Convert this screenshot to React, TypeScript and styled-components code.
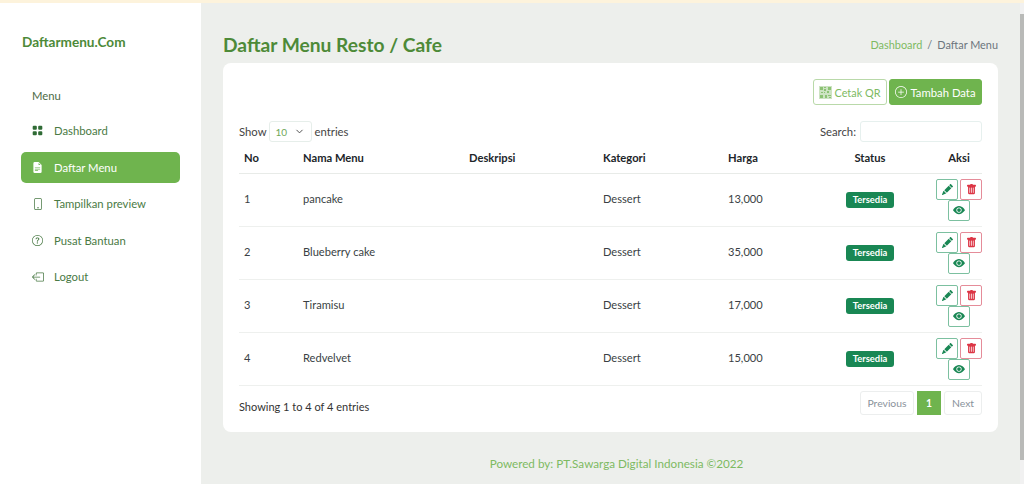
import React from "react";
import styled, { createGlobalStyle } from "styled-components";
import { ChevronDown } from "lucide-react";
import { BsGridFill, BsFileEarmarkTextFill, BsPhone, BsQuestionCircle, BsBoxArrowLeft, BsPlusCircle, BsEyeFill, BsPencilFill, BsTrashFill } from "react-icons/bs";

const Global = createGlobalStyle`
  html, body { margin: 0; padding: 0; height: 100%; overflow: hidden; background: #edefec; }
  body { font-family: "Lato", "Noto Sans", sans-serif; font-size: 11.3px; color: #333; }
  * { box-sizing: border-box; }
`;
const Page = styled.div`
  width: 1024px; height: 484px; display: flex; flex-direction: column; overflow: hidden; position: relative;
`;
const TopStrip = styled.div`height: 3px; background: #fdf3dc; flex: none;`;
const Body = styled.div`flex: 1; display: flex; min-height: 0;`;
const Sidebar = styled.aside`
  width: 201px; flex: none; background: #fff; padding: 30px 21px 0; display: flex; flex-direction: column;
`;
const Brand = styled.div`
  font-size: 13.6px; font-weight: 700; color: #4d8a38; line-height: 18px; margin-bottom: 37px; padding-left: 1px;
`;
const MenuLabel = styled.div`
  font-size: 11.3px; color: #4d6b47; padding-left: 11px; line-height: 16px; margin-bottom: 11px;
`;
const NavItem = styled.div<{ $active?: boolean }>`
  height: 31px; margin-bottom: 5.6px; display: flex; align-items: center; padding-left: 11px;
  border-radius: 5px; font-size: 11.3px;
  color: ${p => (p.$active ? "#fff" : "#4a7a45")};
  background: ${p => (p.$active ? "#6fb44e" : "transparent")};
`;
const NavIcon = styled.span<{ $dark?: boolean }>`
  width: 22px; flex: none; display: flex; align-items: center; color: ${p => (p.$dark ? "#2f6b35" : "inherit")};
`;
const Main = styled.main`flex: 1; min-width: 0; padding: 0 26px 0 22px; display: flex; flex-direction: column;`;
const Header = styled.div`
  height: 60px; display: flex; justify-content: space-between; align-items: flex-end; padding-bottom: 6px;
`;
const Title = styled.h1`margin: 0; font-size: 19.2px; font-weight: 700; color: #4d8a38; line-height: 24px;`;
const Crumbs = styled.div`font-size: 10.9px; color: #6c757d; display: flex; gap: 5px; margin-bottom: 6px;`;
const CrumbLink = styled.span`color: #7dba62;`;
const Card = styled.section`
  background: #fff; border-radius: 8px; padding: 16px; height: 369px; display: flex; flex-direction: column;
`;
const Actions = styled.div`display: flex; justify-content: flex-end; gap: 2px; margin-bottom: 16px;`;
const OutlineBtn = styled.button`
  width: 74px; height: 26px; padding: 0; display: flex; align-items: center; justify-content: center; gap: 2px; border-radius: 3px;
  font: inherit; font-size: 10.9px; background: #fff; color: #7dba62; border: 1px solid #b9d9a9;
`;
const SolidBtn = styled.button`
  width: 93px; height: 26px; padding: 0; display: flex; align-items: center; justify-content: center; gap: 3px; border-radius: 3px;
  font: inherit; font-size: 11.3px; background: #6fb44e; color: #fff; border: 1px solid #6fb44e;
`;
const Controls = styled.div`display: flex; justify-content: space-between; align-items: center; height: 21px; margin-bottom: 2px;`;
const Group = styled.div`display: flex; align-items: center; gap: 2px; color: #444;`;
const SelectBox = styled.div`
  width: 43px; height: 21px; border: 1px solid #e6eeea; border-radius: 3px; display: flex; align-items: center;
  justify-content: space-between; padding: 0 6px; font-size: 10px; color: #6fa85a; margin-right: 1px;
`;
const SearchBox = styled.div`width: 122px; height: 21px; border: 1px solid #e6f0ee; border-radius: 3px; margin-left: 2px;`;
const Table = styled.table`width: 743px; border-collapse: collapse; table-layout: fixed;`;
const Th = styled.th`
  height: 29px; padding: 0 5px 2px; font-size: 11.2px; font-weight: 700; color: #212529; border-bottom: 1px solid #e8ebe8; text-align: left;
`;
const Td = styled.td`
  height: 53px; padding: 0 5px 2px; font-size: 11.1px; color: #3a3f44; border-bottom: 1px solid #eef0ee;
`;
const StatusTh = styled(Th)`padding-right: 24px; text-align: center;`;
const AksiTh = styled(Th)`padding: 0 0 2px; text-align: center;`;
const StatusTd = styled(Td)`padding: 0 24px 0 5px; text-align: center;`;
const ActionCell = styled.td`height: 53px; padding: 0; border-bottom: 1px solid #eef0ee;`;
const Badge = styled.span`
  display: inline-block; width: 48px; height: 16px; line-height: 16px; border-radius: 3px;
  background: #198754; color: #fff; font-size: 9.4px; font-weight: 700; text-align: center;
`;
const IconRow = styled.div`display: flex; flex-wrap: wrap; justify-content: center; column-gap: 2px; width: 46px;`;
const IconBtn = styled.div<{ $danger?: boolean }>`
  width: 22px; height: 21px; border-radius: 2px; display: flex; align-items: center; justify-content: center;
  border: 1px solid ${p => (p.$danger ? "#e58c99" : "#7cc0a0")};
  color: ${p => (p.$danger ? "#dc3545" : "#198754")};
`;
const Footer = styled.div`display: flex; justify-content: space-between; align-items: center; margin-top: 5px;`;
const Info = styled.div`color: #333; padding-top: 8px; font-size: 11px;`;
const Pager = styled.div`display: flex; gap: 3px;`;
const PageBtn = styled.div<{ $active?: boolean; $w: number }>`
  width: ${p => p.$w}px; height: 24px; display: flex; align-items: center; justify-content: center; font-size: 10.4px;
  border: 1px solid ${p => (p.$active ? "#6fb44e" : "#eceeee")}; border-radius: ${p => (p.$active ? "0" : "3px")};
  background: ${p => (p.$active ? "#6fb44e" : "#fff")}; color: ${p => (p.$active ? "#fff" : "#8a939b")};
  font-weight: ${p => (p.$active ? 700 : 400)};
`;
const PowerLine = styled.div`text-align: center; color: #7dba62; font-size: 11.7px; margin-top: 24px; padding-left: 12px;`;
const ScrollTrack = styled.div`position: absolute; right: 0; top: 3px; bottom: 0; width: 4px; background: #f1f1f1;`;
const ScrollThumb = styled.div`position: absolute; left: 0; right: 0; top: 11px; height: 446px; background: #b9bab8;`;

const QrIcon = () => (
  <svg width="13" height="13" viewBox="0 0 13 13" fill="#a3cc8f">
    <path d="M0 0h13v13H0z" opacity=".55" />
    <path d="M1 1h3v3H1zM9 1h3v3H9zM1 9h3v3H1zM5 1h2v1H5zM5 3h2v2H5zM5 6h1v1H5zM8 5h2v2H8zM2 6h2v1H2zM6 9h2v3H6zM9 9h3v1H9zM10 11h2v1h-2z" fill="#8cc274" />
  </svg>
);
const rows = [
  ["1", "pancake", "13,000"],
  ["2", "Blueberry cake", "35,000"],
  ["3", "Tiramisu", "17,000"],
  ["4", "Redvelvet", "15,000"],
];
export default function App() {
  return (
    <Page>
      <Global />
      <TopStrip />
      <Body>
        <Sidebar>
          <Brand>Daftarmenu.Com</Brand>
          <MenuLabel>Menu</MenuLabel>
          <NavItem><NavIcon $dark><BsGridFill size={11} /></NavIcon>Dashboard</NavItem>
          <NavItem $active><NavIcon><BsFileEarmarkTextFill size={11} /></NavIcon>Daftar Menu</NavItem>
          <NavItem><NavIcon><BsPhone size={12} /></NavIcon>Tampilkan preview</NavItem>
          <NavItem><NavIcon><BsQuestionCircle size={11} /></NavIcon>Pusat Bantuan</NavItem>
          <NavItem><NavIcon><BsBoxArrowLeft size={12} /></NavIcon>Logout</NavItem>
        </Sidebar>
        <Main>
          <Header>
            <Title>Daftar Menu Resto / Cafe</Title>
            <Crumbs><CrumbLink>Dashboard</CrumbLink><span>/</span><span>Daftar Menu</span></Crumbs>
          </Header>
          <Card>
            <Actions>
              <OutlineBtn><QrIcon />Cetak QR</OutlineBtn>
              <SolidBtn><BsPlusCircle size={12} />Tambah Data</SolidBtn>
            </Actions>
            <Controls>
              <Group>Show <SelectBox>10<ChevronDown size={11} color="#444" /></SelectBox> entries</Group>
              <Group>Search: <SearchBox /></Group>
            </Controls>
            <Table>
              <colgroup>
                <col style={{ width: 59 }} /><col style={{ width: 166 }} /><col style={{ width: 134 }} />
                <col style={{ width: 125 }} /><col style={{ width: 100 }} /><col style={{ width: 113 }} /><col style={{ width: 46 }} />
              </colgroup>
              <thead>
                <tr>
                  <Th>No</Th><Th>Nama Menu</Th><Th>Deskripsi</Th><Th>Kategori</Th><Th>Harga</Th>
                  <StatusTh>Status</StatusTh><AksiTh>Aksi</AksiTh>
                </tr>
              </thead>
              <tbody>
                {rows.map(r => (
                  <tr key={r[0]}>
                    <Td>{r[0]}</Td><Td>{r[1]}</Td><Td></Td><Td>Dessert</Td><Td>{r[2]}</Td>
                    <StatusTd><Badge>Tersedia</Badge></StatusTd>
                    <ActionCell>
                      <IconRow>
                        <IconBtn><BsPencilFill size={11} /></IconBtn>
                        <IconBtn $danger><BsTrashFill size={11} /></IconBtn>
                        <IconBtn><BsEyeFill size={12} /></IconBtn>
                      </IconRow>
                    </ActionCell>
                  </tr>
                ))}
              </tbody>
            </Table>
            <Footer>
              <Info>Showing 1 to 4 of 4 entries</Info>
              <Pager>
                <PageBtn $w={54}>Previous</PageBtn><PageBtn $w={24} $active>1</PageBtn><PageBtn $w={38}>Next</PageBtn>
              </Pager>
            </Footer>
          </Card>
          <PowerLine>Powered by: PT.Sawarga Digital Indonesia ©2022</PowerLine>
        </Main>
      </Body>
      <ScrollTrack><ScrollThumb /></ScrollTrack>
    </Page>
  );
}
